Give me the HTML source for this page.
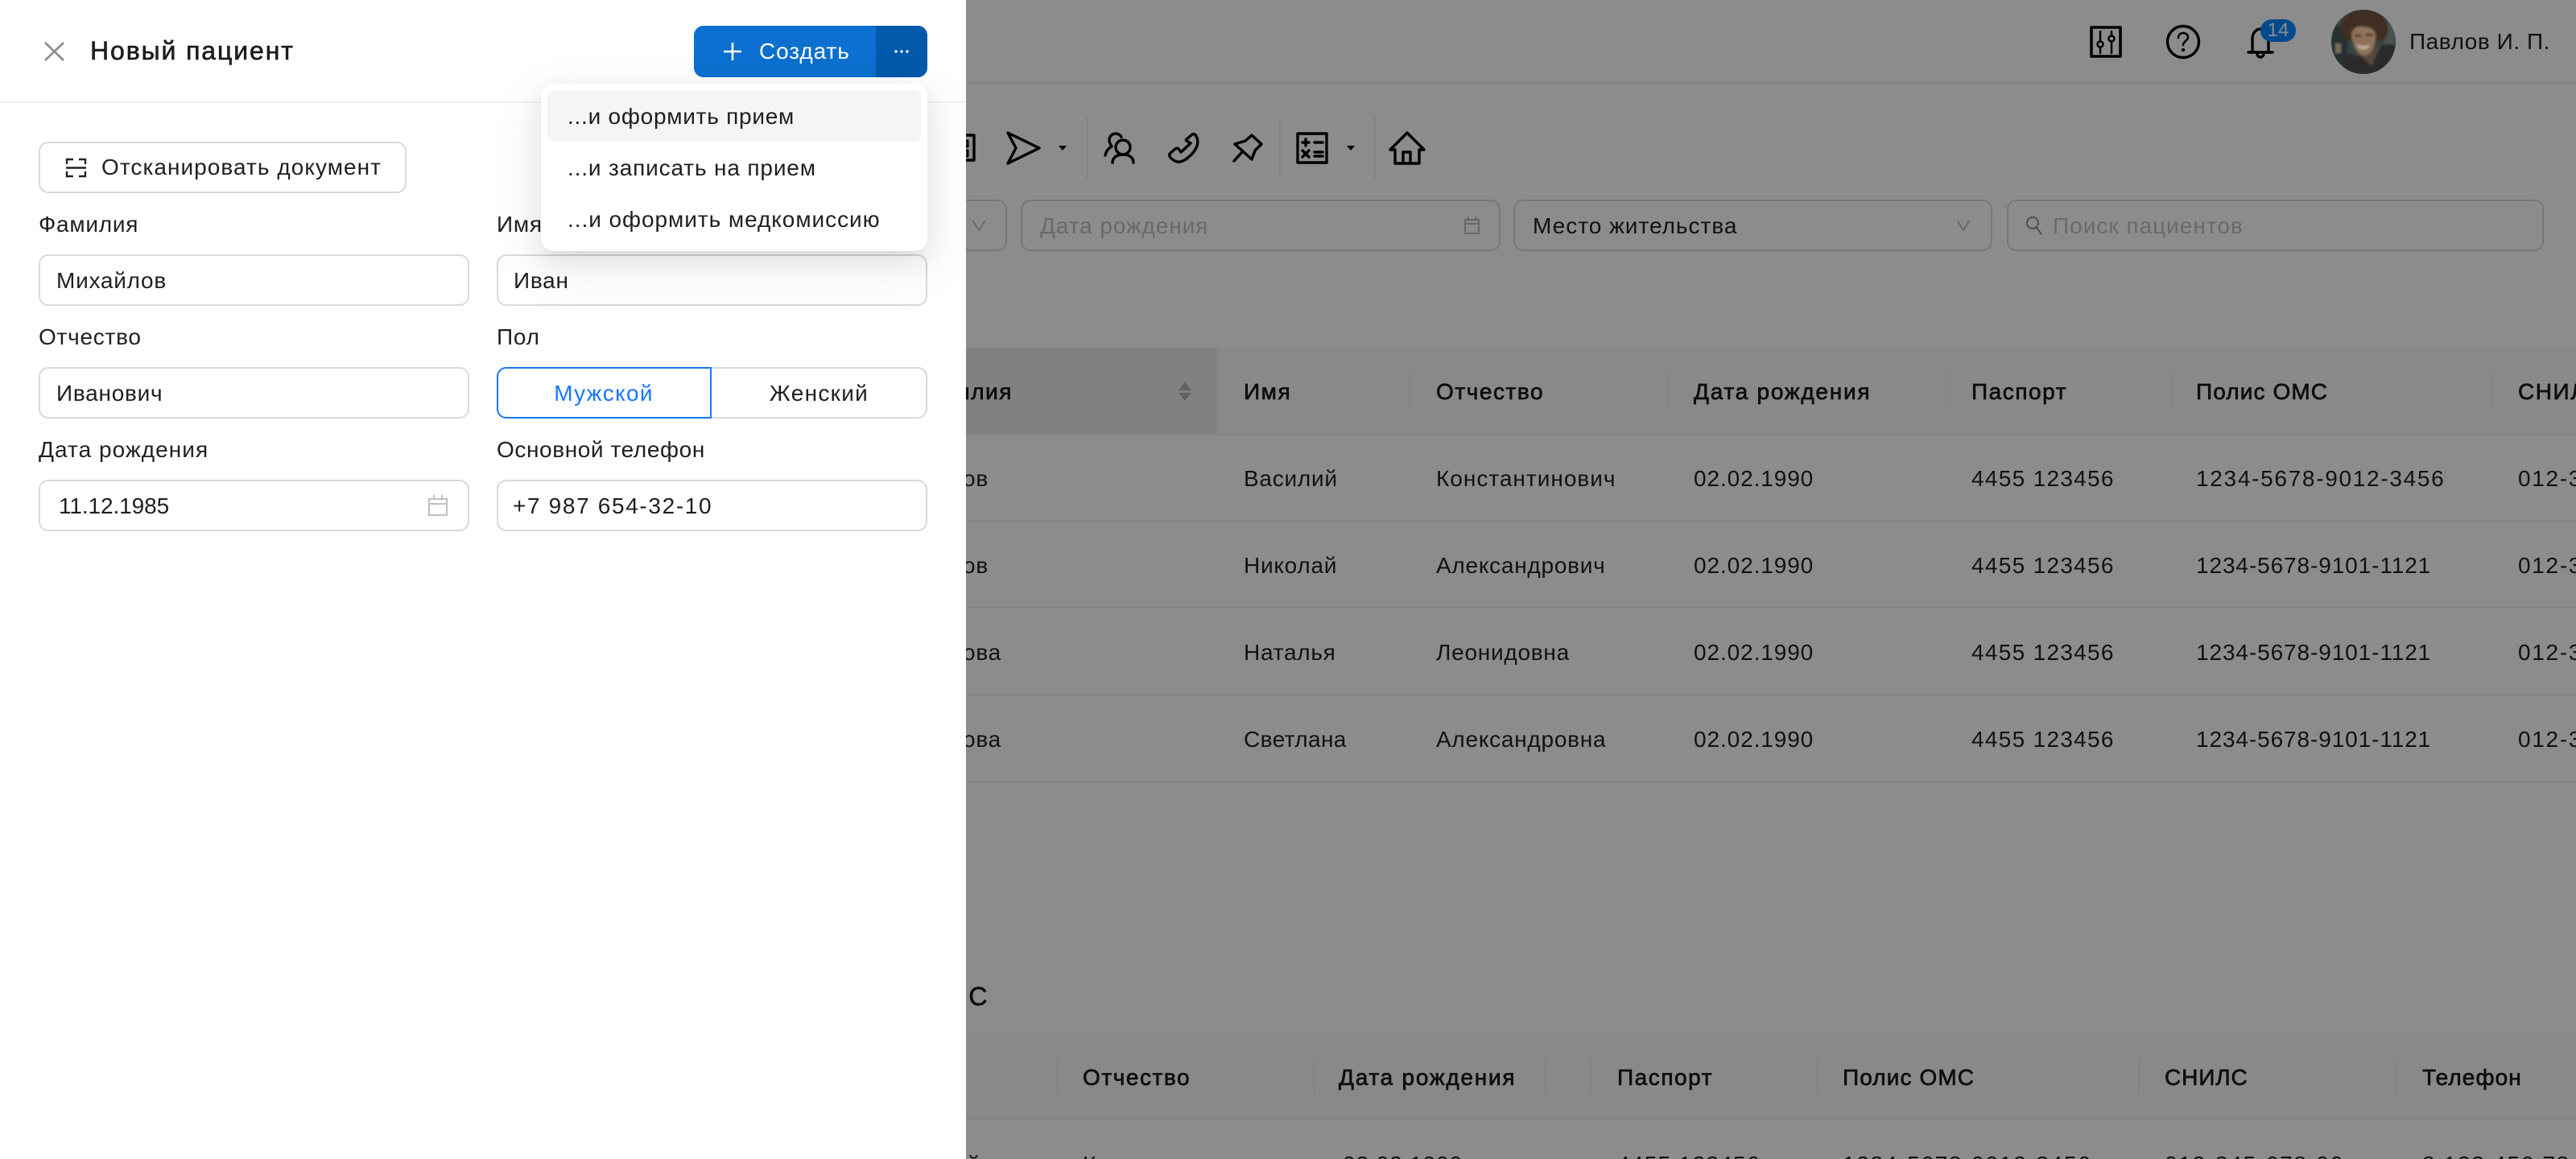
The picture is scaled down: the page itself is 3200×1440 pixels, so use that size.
<!DOCTYPE html>
<html lang="ru"><head><meta charset="utf-8"><title>Новый пациент</title>
<style>
*{box-sizing:border-box}
html,body{margin:0;padding:0;width:3200px;height:1440px;overflow:hidden;background:#fff;font-family:"Liberation Sans","Noto Sans CJK SC",sans-serif;font-size:28px;color:rgba(0,0,0,.88)}
#p{position:relative;width:3200px;height:1440px;overflow:hidden;background:#fff}
.t{position:absolute;white-space:nowrap;line-height:40px;height:40px;letter-spacing:.75px}
.h{-webkit-text-stroke:.7px currentColor;letter-spacing:1.55px}
.n{letter-spacing:1.7px}
.m{letter-spacing:.9px}
.d{letter-spacing:.9px}
.s{letter-spacing:1.3px}
.c{letter-spacing:1px}
.a{position:absolute}
.box{position:absolute;background:#fff;border:2px solid #d9d9d9;border-radius:12px}
.ph{color:rgba(0,0,0,.25);letter-spacing:.9px}
.line{position:absolute;height:2px;left:1200px;right:0;background:#f0f0f0}
.div{position:absolute;width:2px;background:#f0f0f0}
svg{position:absolute;left:0;top:0}
</style></head><body><div id="p">

<!-- background page -->
<div class="a" style="left:1200px;top:102px;right:0;height:2px;background:#f0f0f0"></div>
<div class="a" style="left:1200px;top:432px;right:0;height:108px;background:#fafafa"></div>
<div class="a" style="left:1200px;top:432px;width:312px;height:108px;background:#ececec"></div>
<div class="a" style="left:1200px;top:1283px;right:0;height:108px;background:#fafafa"></div>
<div class="line" style="top:539px"></div><div class="line" style="top:646px"></div><div class="line" style="top:754px"></div><div class="line" style="top:862px"></div><div class="line" style="top:970px"></div><div class="line" style="top:1390px"></div>
<div class="div" style="left:1750px;top:464px;height:44px"></div><div class="div" style="left:2071px;top:464px;height:44px"></div><div class="div" style="left:2416px;top:464px;height:44px"></div><div class="div" style="left:2696px;top:464px;height:44px"></div><div class="div" style="left:3095px;top:464px;height:44px"></div>
<div class="div" style="left:1312px;top:1316px;height:44px"></div><div class="div" style="left:1632px;top:1316px;height:44px"></div><div class="div" style="left:1918px;top:1316px;height:44px"></div><div class="div" style="left:1976px;top:1316px;height:44px"></div><div class="div" style="left:2256px;top:1316px;height:44px"></div><div class="div" style="left:2656px;top:1316px;height:44px"></div><div class="div" style="left:2975px;top:1316px;height:44px"></div>
<div class="div" style="left:1350px;top:144px;height:79px"></div><div class="div" style="left:1589px;top:144px;height:79px"></div><div class="div" style="left:1707px;top:144px;height:79px"></div>

<!-- filters -->
<div class="box" style="left:1100px;top:248px;width:151px;height:64px"></div>
<div class="box" style="left:1268px;top:248px;width:596px;height:64px"></div>
<div class="box" style="left:1880px;top:248px;width:595px;height:64px"></div>
<div class="box" style="left:2493px;top:248px;width:667px;height:64px"></div>
<div class="t ph" style="left:1292px;top:261px">Дата рождения</div>
<div class="t c" style="left:1904px;top:261px">Место жительства</div>
<div class="t ph" style="left:2550px;top:261px;letter-spacing:1px">Поиск пациентов</div>
<div class="t" style="left:2993px;top:32px;letter-spacing:.55px">Павлов И. П.</div>

<!-- table 1 -->
<div class="t h" style="right:1942px;top:467px">Фамилия</div>
<div class="t h" style="left:1545px;top:467px">Имя</div><div class="t h" style="left:1784px;top:467px">Отчество</div><div class="t h" style="left:2104px;top:467px;letter-spacing:1.75px">Дата рождения</div><div class="t h" style="left:2449px;top:467px">Паспорт</div><div class="t h" style="left:2728px;top:467px;letter-spacing:1.1px">Полис ОМС</div><div class="t h" style="left:3128px;top:467px">СНИЛС</div>
<div class="t" style="right:1972px;top:575px">Петров</div><div class="t" style="left:1545px;top:575px">Василий</div><div class="t c" style="left:1784px;top:575px">Константинович</div><div class="t d" style="left:2104px;top:575px">02.02.1990</div><div class="t s" style="left:2449px;top:575px">4455 123456</div><div class="t n" style="left:2728px;top:575px">1234-5678-9012-3456</div><div class="t n" style="left:3128px;top:575px">012-345-678-90</div>
<div class="t" style="right:1972px;top:683px">Иванов</div><div class="t" style="left:1545px;top:683px">Николай</div><div class="t" style="left:1784px;top:683px">Александрович</div><div class="t d" style="left:2104px;top:683px">02.02.1990</div><div class="t s" style="left:2449px;top:683px">4455 123456</div><div class="t m" style="left:2728px;top:683px">1234-5678-9101-1121</div><div class="t n" style="left:3128px;top:683px">012-345-678-90</div>
<div class="t" style="right:1956px;top:791px">Петрова</div><div class="t" style="left:1545px;top:791px">Наталья</div><div class="t" style="left:1784px;top:791px">Леонидовна</div><div class="t d" style="left:2104px;top:791px">02.02.1990</div><div class="t s" style="left:2449px;top:791px">4455 123456</div><div class="t m" style="left:2728px;top:791px">1234-5678-9101-1121</div><div class="t n" style="left:3128px;top:791px">012-345-678-90</div>
<div class="t" style="right:1956px;top:899px">Иванова</div><div class="t" style="left:1545px;top:899px;letter-spacing:.4px">Светлана</div><div class="t" style="left:1784px;top:899px">Александровна</div><div class="t d" style="left:2104px;top:899px">02.02.1990</div><div class="t s" style="left:2449px;top:899px">4455 123456</div><div class="t m" style="left:2728px;top:899px">1234-5678-9101-1121</div><div class="t n" style="left:3128px;top:899px">012-345-678-90</div>

<!-- table 2 -->
<div class="t h" style="right:1972px;top:1218px;font-size:32px">Пациенты ОМС</div>
<div class="t h" style="left:1345px;top:1319px">Отчество</div><div class="t h" style="left:1663px;top:1319px;letter-spacing:1.75px">Дата рождения</div><div class="t h" style="left:2009px;top:1319px">Паспорт</div><div class="t h" style="left:2289px;top:1319px;letter-spacing:1.1px">Полис ОМС</div><div class="t h" style="left:2689px;top:1319px;letter-spacing:.9px">СНИЛС</div><div class="t h" style="left:3009px;top:1319px;letter-spacing:1.1px">Телефон</div>
<div class="t" style="right:1982px;top:1427px">Василий</div><div class="t c" style="left:1345px;top:1427px">Константинович</div><div class="t d" style="left:1668px;top:1427px">02.02.1990</div><div class="t s" style="left:2009px;top:1427px">4455 123456</div><div class="t n" style="left:2289px;top:1427px">1234-5678-9012-3456</div><div class="t n" style="left:2689px;top:1427px">012-345-678-90</div><div class="t n" style="left:3009px;top:1427px">8 123 456 78 90</div>

<!-- page icons -->
<svg width="3200" height="1440" fill="none" stroke="#000" stroke-width="3.4" stroke-linecap="round" stroke-linejoin="round">
<!-- partial -->
<path d="M1195 168H1210V199H1195" stroke-linecap="butt"/><path d="M1195 175h7v7h-7M1195 187h7v7h-7" stroke-width="3"/>
<!-- send -->
<path d="M1252 165L1291 184L1252 203L1262 184Z"/>
<path d="M1315 181h10l-5 6z" fill="#000" stroke="none"/>
<!-- persons -->
<circle cx="1395" cy="183" r="9"/><path d="M1382 202c0-6 5-10 13-10s13 4 13 10"/><path d="M1393 170c-2-3-4-4-7-4-5 0-8 4-8 8 0 3 1 5 3 8-4 2-7 6-8 11"/>
<!-- phone -->
<path d="M1474 173L1481 167C1483 166 1485 167 1486 169C1490 177 1487 184 1481 191C1475 197 1469 202 1462 201C1459 200 1454 197 1453 194C1452 192 1453 191 1454 190L1460 185C1461 184 1463 184 1464 185L1467 189L1479 178L1474 175C1473 174 1473 174 1474 173Z"/>
<!-- pin -->
<path d="M1534 179L1547 175L1555 168L1567 179L1559 187L1555 198Z"/><path d="M1542 190L1533 200"/>
<!-- calc -->
<rect x="1612" y="166" width="36" height="36"/><path d="M1618 177h8M1622 173v8M1633 177h10M1618 187l8 8M1626 187l-8 8M1633 189h10M1633 194h10"/>
<path d="M1673 181h10l-5 6z" fill="#000" stroke="none"/>
<!-- house -->
<path d="M1748 165L1727 186H1733V203H1763V186H1769Z"/><path d="M1743 203V189H1752V203"/>
<!-- calendar filter -->
<path d="M1820 273h17v17h-17zM1820 278h17M1824 270v4M1833 270v4" stroke="rgba(0,0,0,.25)" stroke-width="2"/>
<!-- filter arrows -->
<path d="M1209 275l7 11 7-11M2432 275l7 11 7-11" stroke="rgba(0,0,0,.25)" stroke-width="2"/>
<!-- search -->
<circle cx="2525" cy="277" r="7" stroke="rgba(0,0,0,.4)" stroke-width="2.2"/><path d="M2530 283l6 8" stroke="rgba(0,0,0,.4)" stroke-width="2.2"/>
<!-- sort -->
<path d="M1464 485l8-11 8 11zM1464 488l8 10 8-10z" fill="rgba(0,0,0,.25)" stroke="none"/>
<!-- settings -->
<rect x="2598" y="34" width="36" height="36" stroke-width="3.6" stroke-linecap="butt"/><path d="M2609 39v12M2609 60v6M2623 39v5M2623 53v13" stroke-width="2.5"/><circle cx="2609" cy="55" r="3.5" stroke-width="2.5"/><circle cx="2623" cy="48" r="3.5" stroke-width="2.5"/>
<!-- help -->
<circle cx="2712" cy="52" r="19.5"/><path d="M2706 47c0-4 3-6 6-6 4 0 6 3 6 5 0 5-6 5-6 10" stroke-width="2.5"/><circle cx="2712" cy="62" r="1.2" stroke-width="2"/>
<!-- bell -->
<path d="M2793 65h30M2798 65V48c0-6 4-12 10-12s10 6 10 12v17"/><path d="M2804 67a4 4 0 0 0 8 0"/>
</svg>
<div class="a" style="left:2808px;top:24px;width:44px;height:28px;border-radius:14px;background:#0086ff"></div>
<div class="t" style="left:2808px;top:18px;width:44px;text-align:center;color:#fff;font-size:24px;letter-spacing:0">14</div>

<!-- overlay -->
<div class="a" style="left:1200px;top:0;right:0;bottom:0;background:rgba(0,0,0,.45)"></div>

<!-- avatar -->
<svg style="left:2896px;top:12px" width="80" height="80" viewBox="0 0 80 80">
<defs><clipPath id="c"><circle cx="40" cy="40" r="40"/></clipPath><filter id="b" x="-30%" y="-30%" width="160%" height="160%"><feGaussianBlur stdDeviation="1.4"/></filter></defs>
<g clip-path="url(#c)"><rect width="80" height="80" fill="#3a4442"/><g filter="url(#b)">
<path d="M0 20h20v50H0z" fill="#263030"/><rect x="5" y="42" width="7" height="12" fill="#746e5c"/>
<path d="M66 12h14v40H66z" fill="#4a5250"/>
<path d="M14 60C22 53 30 56 36 58C44 62 46 66 50 70C56 60 58 48 64 44C70 42 76 43 80 44V80H14Z" fill="#2b2b2b"/>
<path d="M31 52l19 18 9-24z" fill="#5a4a3e"/>
<path d="M14 30C7 14 22 0 42 0C62 0 74 16 70 30C68 38 61 40 56 38L22 38C18 38 16 34 14 30Z" fill="#3f2e22"/>
<path d="M25 30C27 22 33 20 40 21C46 22 53 22 55 30C56 40 52 56 42 57C32 57 26 44 25 30Z" fill="#8d7159"/>
<path d="M32 43q9 4 16 0l-2 5q-6 3-12 0z" fill="#bcae9e"/><rect x="29" y="31" width="8" height="2.500" fill="#3a2c22"/><rect x="43" y="30" width="8" height="2.500" fill="#3a2c22"/>
<path d="M24 30C25 24 28 20 34 19C42 22 50 20 56 30C58 24 52 12 40 13C30 13 22 22 24 30Z" fill="#3f2e22"/>
</g></g></svg>

<!-- drawer -->
<div class="a" style="left:0;top:0;width:1200px;height:1440px;background:#fff"></div>
<div class="a" style="left:0;top:126px;width:1200px;height:2px;background:#f0f0f0"></div>
<div class="t h" style="left:112px;top:43px;font-size:32px;letter-spacing:1.9px;-webkit-text-stroke:.6px">Новый пациент</div>
<div class="a" style="left:862px;top:32px;width:290px;height:64px;background:#0b70cf;border-radius:12px;overflow:hidden"><div class="a" style="left:226px;top:0;width:64px;height:64px;background:#0059ab"></div></div>
<div class="t" style="left:943px;top:44px;color:#fff;letter-spacing:.9px">Создать</div>
<div class="box" style="left:48px;top:176px;width:457px;height:64px"></div>
<div class="t" style="left:126px;top:188px;letter-spacing:1.05px">Отсканировать документ</div>
<div class="t" style="left:48px;top:259px">Фамилия</div><div class="t" style="left:617px;top:259px">Имя</div>
<div class="box" style="left:48px;top:316px;width:535px;height:64px"></div><div class="box" style="left:617px;top:316px;width:535px;height:64px"></div>
<div class="t" style="left:70px;top:329px">Михайлов</div><div class="t" style="left:638px;top:329px">Иван</div>
<div class="t" style="left:48px;top:399px">Отчество</div><div class="t" style="left:617px;top:399px">Пол</div>
<div class="box" style="left:48px;top:456px;width:535px;height:64px"></div><div class="t" style="left:70px;top:469px">Иванович</div>
<div class="box" style="left:617px;top:456px;width:535px;height:64px"></div>
<div class="a" style="left:617px;top:456px;width:267px;height:64px;border:2px solid #1677ff;border-radius:12px 0 0 12px;background:#fff"></div>
<div class="t" style="left:616px;top:469px;width:268px;text-align:center;color:#1677ff;letter-spacing:1.3px">Мужской</div>
<div class="t" style="left:884px;top:469px;width:267px;text-align:center;letter-spacing:1.3px">Женский</div>
<div class="t" style="left:48px;top:539px;letter-spacing:1.05px">Дата рождения</div><div class="t" style="left:617px;top:539px;letter-spacing:.6px">Основной телефон</div>
<div class="box" style="left:48px;top:596px;width:535px;height:64px"></div><div class="box" style="left:617px;top:596px;width:535px;height:64px"></div>
<div class="t" style="left:73px;top:609px;letter-spacing:-.1px">11.12.1985</div><div class="t" style="left:637px;top:609px;letter-spacing:1.65px">+7 987 654-32-10</div>

<!-- drawer icons -->
<svg width="1200" height="720" fill="none" stroke-linecap="butt">
<path d="M56 53L79 75M79 53L56 75" stroke="#8c8c8c" stroke-width="2.6"/>
<path d="M910 53V75M899 64H921" stroke="#fff" stroke-width="2.6"/>
<circle cx="1113" cy="64" r="1.7" fill="#fff"/><circle cx="1120" cy="64" r="1.7" fill="#fff"/><circle cx="1127" cy="64" r="1.7" fill="#fff"/>
<path d="M83 204V198H91M98 198H106V204M83 213V219H91M98 219H106V213M82 208.500H107" stroke="#222" stroke-width="2.4"/>
<path d="M533 620H555V640H533ZM533 626H555M539 615V620M549 615V620" stroke="#bfbfbf" stroke-width="2"/>
</svg>

<!-- dropdown -->
<div class="a" style="left:672px;top:104px;width:480px;height:208px;background:#fff;border-radius:16px;box-shadow:0 12px 32px rgba(0,0,0,.08),0 6px 12px -8px rgba(0,0,0,.12),0 18px 56px 16px rgba(0,0,0,.05)"></div>
<div class="a" style="left:680px;top:112px;width:464px;height:64px;background:#f5f5f5;border-radius:8px"></div>
<div class="t" style="left:705px;top:125px;letter-spacing:.75px">...и оформить прием</div>
<div class="t" style="left:705px;top:189px;letter-spacing:.85px">...и записать на прием</div>
<div class="t" style="left:705px;top:253px;letter-spacing:.95px">...и оформить медкомиссию</div>
</div></body></html>
